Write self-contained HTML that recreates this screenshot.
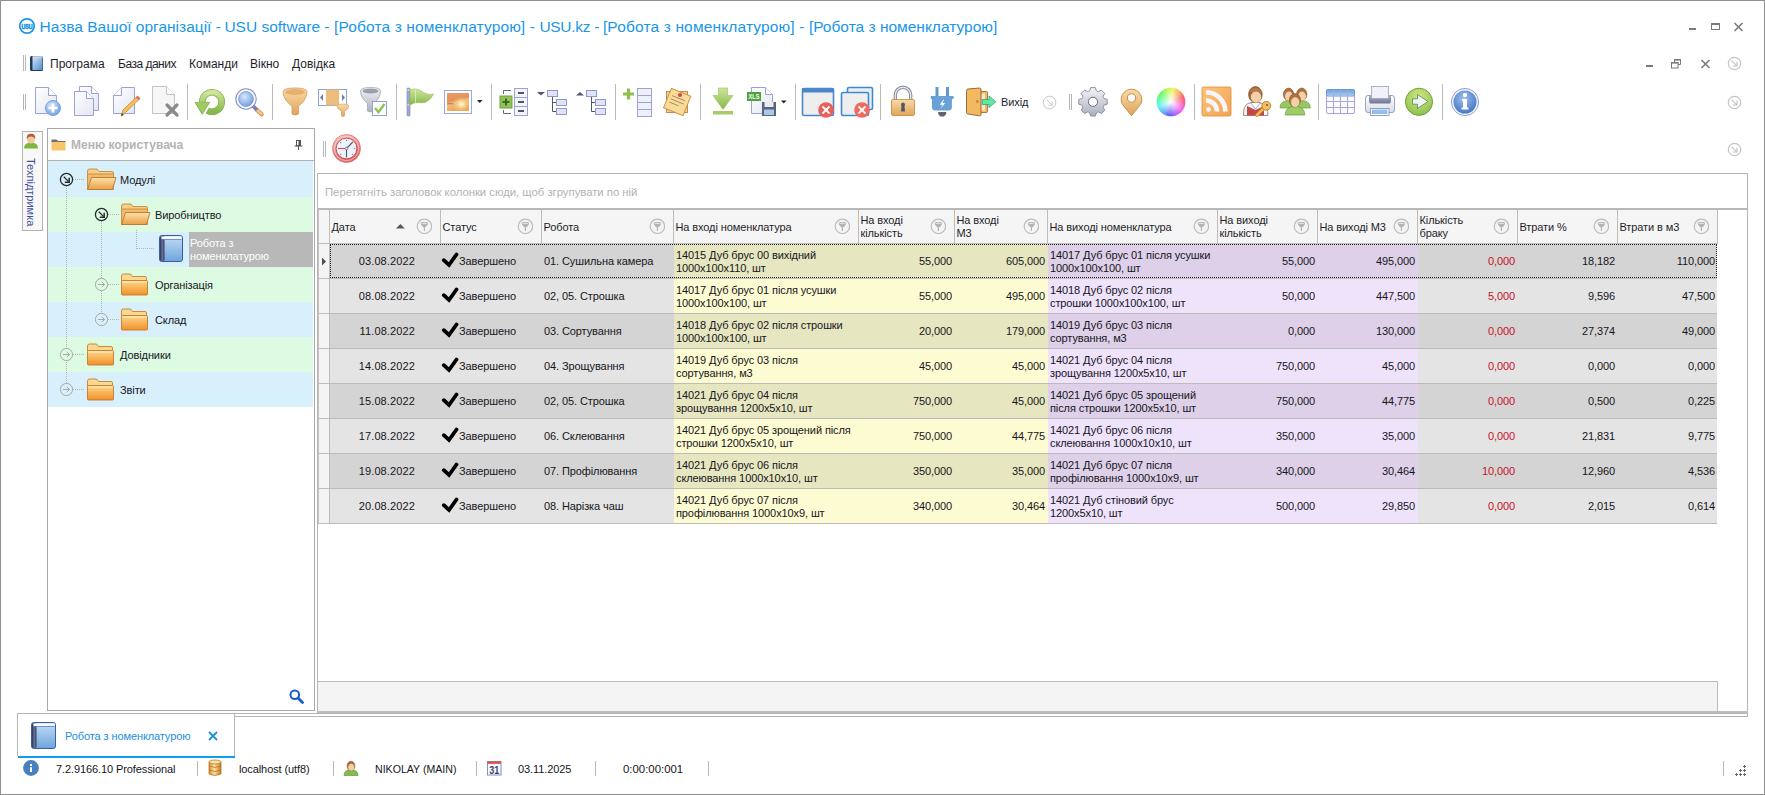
<!DOCTYPE html><html><head><meta charset="utf-8"><style>
html,body{margin:0;padding:0}
body{width:1765px;height:795px;position:relative;overflow:hidden;background:#fff;font-family:"Liberation Sans",sans-serif;font-size:11px;color:#16161c}
div,span{box-sizing:border-box}
.t{position:absolute;white-space:pre;line-height:13px}
</style></head><body><div style="position:absolute;left:0px;top:0px;width:1765px;height:795px;border:1px solid #8f8f8f"></div><svg style="position:absolute;left:18px;top:17px" width="18" height="18" viewBox="0 0 18 18"><circle cx="9" cy="9" r="7.2" fill="none" stroke="#1a96e6" stroke-width="1.7"/><text x="9" y="12" font-size="6.6" font-weight="bold" text-anchor="middle" fill="#1a96e6" stroke="#1a96e6" stroke-width="0.55" font-family="Liberation Sans" textLength="11.2" lengthAdjust="spacingAndGlyphs">USU</text></svg><div class="t" style="left:39.5px;top:17.38px;font-size:15.5px;line-height:19px;color:#1a96e6;letter-spacing:0px;">Назва Вашої організації -</div><div class="t" style="left:224.4px;top:17.38px;font-size:15.5px;line-height:19px;color:#1a96e6;letter-spacing:0px;">USU software -</div><div class="t" style="left:334.1px;top:17.38px;font-size:15.5px;line-height:19px;color:#1a96e6;letter-spacing:0.12px;">[Робота з номенклатурою] -</div><div class="t" style="left:539.4px;top:17.38px;font-size:15.5px;line-height:19px;color:#1a96e6;letter-spacing:-0.3px;">USU.kz -</div><div class="t" style="left:602.9px;top:17.38px;font-size:15.5px;line-height:19px;color:#1a96e6;letter-spacing:0.15px;">[Робота з номенклатурою] -</div><div class="t" style="left:808.9px;top:17.38px;font-size:15.5px;line-height:19px;color:#1a96e6;letter-spacing:0px;">[Робота з номенклатурою]</div><div style="position:absolute;left:1689px;top:28px;width:7px;height:2px;background:#7a7a7a"></div><div style="position:absolute;left:1711px;top:23px;width:9px;height:7px;border:1px solid #7a7a7a;border-top-width:2px"></div><svg style="position:absolute;left:1733px;top:22px" width="11" height="10" viewBox="0 0 11 10"><path d="M1.5 1 L9.5 9 M9.5 1 L1.5 9" stroke="#7a7a7a" stroke-width="1.6"/></svg><div style="position:absolute;left:23px;top:55px;width:1px;height:16px;background:#b8b8b8"></div><div style="position:absolute;left:25px;top:55px;width:1px;height:16px;background:#b8b8b8"></div><svg style="position:absolute;left:29px;top:55px" width="15" height="16" viewBox="0 0 15 16"><defs><linearGradient id="mbk" x1="0" y1="0" x2="1" y2="1"><stop offset="0" stop-color="#cfe4f8"/><stop offset="1" stop-color="#4f8ccc"/></linearGradient></defs><rect x="1" y="1" width="13" height="15" rx="1.5" fill="#24385e"/><rect x="3.5" y="2.5" width="10" height="12.5" fill="url(#mbk)"/><rect x="3.5" y="1.3" width="10" height="1.4" fill="#f4f8fc"/></svg><div class="t" style="left:50px;top:57.03px;font-size:12px;line-height:14px;color:#1e1e2a;">Програма</div><div class="t" style="left:118px;top:57.03px;font-size:12px;line-height:14px;color:#1e1e2a;letter-spacing:-0.5px;">База даних</div><div class="t" style="left:189px;top:57.03px;font-size:12px;line-height:14px;color:#1e1e2a;">Команди</div><div class="t" style="left:250px;top:57.03px;font-size:12px;line-height:14px;color:#1e1e2a;">Вікно</div><div class="t" style="left:292px;top:57.03px;font-size:12px;line-height:14px;color:#1e1e2a;">Довідка</div><div style="position:absolute;left:1646px;top:65px;width:7px;height:2px;background:#7a7a7a"></div><svg style="position:absolute;left:1670px;top:58px" width="12" height="11" viewBox="0 0 12 11"><path d="M4.5 5 V1.5 H10.5 V6.5 H8" fill="none" stroke="#7a7a7a" stroke-width="1"/><rect x="4" y="1" width="7" height="1.6" fill="#7a7a7a"/><rect x="1.5" y="4.5" width="6.5" height="5.5" fill="#fff" stroke="#7a7a7a" stroke-width="1"/><rect x="1" y="4" width="7.5" height="1.6" fill="#7a7a7a"/></svg><svg style="position:absolute;left:1700px;top:59px" width="11" height="10" viewBox="0 0 11 10"><path d="M1.5 1 L9.5 9 M9.5 1 L1.5 9" stroke="#7a7a7a" stroke-width="1.6"/></svg><svg style="position:absolute;left:1727px;top:56px" width="15" height="15" viewBox="0 0 15 15"><circle cx="7.5" cy="7.5" r="6.2" fill="none" stroke="#c4c4c4" stroke-width="1.2"/><path d="M4.6 4.6 L9.8 9.8 M10 5.8 V10 H5.8" fill="none" stroke="#c4c4c4" stroke-width="1.2"/></svg><svg style="position:absolute;left:1727px;top:95px" width="15" height="15" viewBox="0 0 15 15"><circle cx="7.5" cy="7.5" r="6.2" fill="none" stroke="#c4c4c4" stroke-width="1.2"/><path d="M4.6 4.6 L9.8 9.8 M10 5.8 V10 H5.8" fill="none" stroke="#c4c4c4" stroke-width="1.2"/></svg><svg style="position:absolute;left:1727px;top:142px" width="15" height="15" viewBox="0 0 15 15"><circle cx="7.5" cy="7.5" r="6.2" fill="none" stroke="#c4c4c4" stroke-width="1.2"/><path d="M4.6 4.6 L9.8 9.8 M10 5.8 V10 H5.8" fill="none" stroke="#c4c4c4" stroke-width="1.2"/></svg><svg style="position:absolute;left:0;top:0" width="1765" height="130" viewBox="0 0 1765 130"><defs><linearGradient id="gPage" x1="0" y1="0" x2="1" y2="1"><stop offset="0" stop-color="#ffffff"/><stop offset="1" stop-color="#e3e6f3"/></linearGradient><linearGradient id="gGold" x1="0" y1="0" x2="0" y2="1"><stop offset="0" stop-color="#f8dca8"/><stop offset="1" stop-color="#e0a45a"/></linearGradient><linearGradient id="gGreen" x1="0" y1="0" x2="0" y2="1"><stop offset="0" stop-color="#cfe59a"/><stop offset="1" stop-color="#86b84a"/></linearGradient><radialGradient id="gBlueBall" cx="0.4" cy="0.35" r="0.7"><stop offset="0" stop-color="#d9e8fb"/><stop offset="1" stop-color="#6b9ee0"/></radialGradient><radialGradient id="gInfo" cx="0.45" cy="0.35" r="0.7"><stop offset="0" stop-color="#9ec0ee"/><stop offset="1" stop-color="#3f72c0"/></radialGradient><radialGradient id="gGreenBall" cx="0.5" cy="0.3" r="0.75"><stop offset="0" stop-color="#cce880"/><stop offset="1" stop-color="#8cbe4c"/></radialGradient><linearGradient id="gSilver" x1="0" y1="0" x2="0" y2="1"><stop offset="0" stop-color="#f2f4f8"/><stop offset="1" stop-color="#aab0bc"/></linearGradient><linearGradient id="gOrange" x1="0" y1="0" x2="1" y2="1"><stop offset="0" stop-color="#fcc47c"/><stop offset="1" stop-color="#f2a450"/></linearGradient><linearGradient id="gSunset" x1="0" y1="0" x2="0.3" y2="1"><stop offset="0" stop-color="#e0a070"/><stop offset="0.45" stop-color="#e89058"/><stop offset="0.6" stop-color="#f0c080"/><stop offset="1" stop-color="#eba858"/></linearGradient></defs><rect x="23" y="94" width="1" height="16" fill="#b4b4b4"/><rect x="25" y="94" width="1" height="16" fill="#b4b4b4"/><path d="M35.5 87.5 H48.5 L56.5 95.5 V113.5 H35.5 Z" fill="url(#gPage)" stroke="#9aa2d6" stroke-width="1"/><path d="M48.5 87.5 V95.5 H56.5" fill="#fff" stroke="#9aa2d6" stroke-width="1"/><circle cx="53" cy="108" r="7.5" fill="url(#gBlueBall)" stroke="#7aa0d8" stroke-width="1"/><path d="M53 103.5 V112.5 M48.5 108 H57.5" stroke="#fff" stroke-width="2.6"/><path d="M79.5 86.5 H91.5 L98.5 93.5 V110.5 H79.5 Z" fill="url(#gPage)" stroke="#9aa2d6" stroke-width="1"/><path d="M91.5 86.5 V93.5 H98.5" fill="#fff" stroke="#9aa2d6" stroke-width="1"/><path d="M74.5 91.5 H86.5 L93.5 98.5 V115.5 H74.5 Z" fill="url(#gPage)" stroke="#9aa2d6" stroke-width="1"/><path d="M86.5 91.5 V98.5 H93.5" fill="#fff" stroke="#9aa2d6" stroke-width="1"/><path d="M121.5 87.5 H134.5 V113.5 H113.5 V95.5 Z" fill="url(#gPage)" stroke="#9aa2d6" stroke-width="1"/><path d="M113.5 95.5 H121.5 V87.5" fill="#fff" stroke="#9aa2d6" stroke-width="1"/><path d="M121 116 L123 110 L137.5 96 L140 98.5 L125.5 112.5 Z" fill="#f2c25a" stroke="#c98a2e" stroke-width="0.8"/><path d="M136 97.5 L137.5 96 L140 98.5 L138.5 100 Z" fill="#e06060"/><path d="M121 116 L122 113 L124 115 Z" fill="#444"/><path d="M152.5 86.5 H166.5 L174.5 94.5 V113.5 H152.5 Z" fill="#f6f6f6" stroke="#c4c4c4" stroke-width="1"/><path d="M166.5 86.5 V94.5 H174.5" fill="#fff" stroke="#c4c4c4" stroke-width="1"/><path d="M167 105 L177 115 M177 105 L167 115" stroke="#8a8a8a" stroke-width="3.2" stroke-linecap="round"/><rect x="187" y="84" width="1" height="36" fill="#bcbcbc"/><path d="M202.25 102 A9.75 9.75 0 1 1 207.4 110.6" fill="none" stroke="#7fae4a" stroke-width="6.6"/><path d="M202.25 102 A9.75 9.75 0 1 1 207.4 110.6" fill="none" stroke="url(#gGreen)" stroke-width="5.2"/><path d="M195 102.4 H209.7 L202.2 114.4 Z" fill="#9ccb62" stroke="#7fae4a" stroke-width="0.8"/><path d="M256.5 109.5 L261.5 114.2" stroke="#c88a48" stroke-width="4.2" stroke-linecap="round"/><path d="M256.5 109.5 L261.5 114.2" stroke="#f2c890" stroke-width="2.6" stroke-linecap="round"/><path d="M252 105 L257 110" stroke="#7880b8" stroke-width="3.6"/><circle cx="246" cy="99" r="10.2" fill="#f8f9fd" stroke="#8890c0" stroke-width="1.1"/><circle cx="246" cy="99" r="7.4" fill="url(#gBlueBall)" stroke="#7c90d0" stroke-width="0.8"/><rect x="272" y="84" width="1" height="36" fill="#bcbcbc"/><path d="M283 92 Q283 88 295 88 Q307 88 307 92 Q306 101 298.5 106 V114 Q295 116 292 114 V106 Q284 101 283 92 Z" fill="url(#gGold)" stroke="#d29a58" stroke-width="0.8"/><ellipse cx="295" cy="92" rx="10" ry="3" fill="#e6b070"/><rect x="318.5" y="89.5" width="28" height="16" fill="#fff" stroke="#8fa0dc"/><rect x="326" y="89.5" width="13" height="16" fill="#eebd7c"/><path d="M323 94 V101 L320 97.5 Z M342 94 V101 L345 97.5 Z" fill="#7a8094"/><path d="M337 106 Q337 104 343 104 Q349 104 349 106 Q348.5 109.5 344.5 111 V116 Q343 117 341.5 116 V111 Q337.5 109.5 337 106 Z" fill="url(#gGold)" stroke="#d29a58" stroke-width="0.6"/><path d="M360.5 91 Q360.5 87.5 370.5 87.5 Q380.5 87.5 380.5 91 Q380 99 374 103 V111 Q370.5 113 367.5 111 V103 Q361 99 360.5 91 Z" fill="url(#gSilver)" stroke="#a0a6b0" stroke-width="0.8"/><ellipse cx="370.5" cy="91" rx="8" ry="2.6" fill="#9aa0aa"/><rect x="372.5" y="101.5" width="14" height="14" fill="#fff" stroke="#98a0d0"/><path d="M375 108 L378.5 112 L384.5 104" fill="none" stroke="#8cc152" stroke-width="2.4"/><rect x="396" y="84" width="1" height="36" fill="#bcbcbc"/><rect x="407" y="88" width="3" height="28" rx="0.8" fill="#a0aad0" stroke="#7a86b8" stroke-width="0.6"/><rect x="407.5" y="89" width="2" height="2" fill="#c8e890"/><rect x="407.5" y="104" width="2" height="1.5" fill="#c8e890"/><path d="M410 89.5 Q418 87.5 423.5 92.5 Q428 95.5 433.8 94 Q430 100.5 425 102.5 Q421 103 418 102.5 Q413 102.6 410 105 Z" fill="url(#gGreen)" stroke="#8ab058" stroke-width="0.5"/><path d="M415.5 89.5 V103" stroke="#e4f4c0" stroke-width="1" opacity="0.7"/><defs><radialGradient id="gSun" cx="0.65" cy="0.62" r="0.45"><stop offset="0" stop-color="#fffbe0" stop-opacity="1"/><stop offset="0.35" stop-color="#fce0a0" stop-opacity="0.8"/><stop offset="1" stop-color="#f0b070" stop-opacity="0"/></radialGradient></defs><rect x="444.5" y="90.5" width="27" height="23" fill="#fff" stroke="#9aaad8"/><rect x="447" y="93" width="22" height="18" fill="url(#gSunset)"/><path d="M447 103.5 Q452 102.6 456 104.2 H447 Z" fill="#8a5a40" opacity="0.7"/><rect x="447" y="93" width="22" height="18" fill="url(#gSun)"/><path d="M477 100 H482.5 L479.75 103 Z" fill="#222"/><rect x="491" y="84" width="1" height="36" fill="#bcbcbc"/><path d="M511 90.5 H503.5 V94 M503.5 110 V113.5 H511" fill="none" stroke="#606880" stroke-width="1"/><rect x="500" y="96" width="12" height="12" fill="#93c25a" stroke="#6ea03a"/><path d="M506 98.5 V105.5 M502.5 102 H509.5" stroke="#3b6a1e" stroke-width="2"/><rect x="514.5" y="88.5" width="13" height="9" fill="#f4f5fb" stroke="#9aa2d6"/><rect x="518" y="92.0" width="6" height="2" fill="#505464"/><rect x="514.5" y="97.5" width="13" height="9" fill="#f4f5fb" stroke="#9aa2d6"/><rect x="518" y="101.0" width="6" height="2" fill="#505464"/><rect x="514.5" y="106.5" width="13" height="9" fill="#f4f5fb" stroke="#9aa2d6"/><rect x="518" y="110.0" width="6" height="2" fill="#505464"/><path d="M537 92 H545 L541 95.5 Z" fill="#505868"/><path d="M552.5 96.5 V111.5 H556 M552.5 102.5 H556" fill="none" stroke="#505868" stroke-width="1"/><rect x="547.5" y="90.5" width="10" height="6" fill="#dfe3f4" stroke="#8f98cc"/><rect x="556.5" y="99.5" width="10" height="6" fill="#dfe3f4" stroke="#8f98cc"/><rect x="556.5" y="108.5" width="10" height="6" fill="#dfe3f4" stroke="#8f98cc"/><path d="M576 95.5 H584 L580 92 Z" fill="#505868"/><path d="M591.5 96.5 V111.5 H595 M591.5 102.5 H595" fill="none" stroke="#505868" stroke-width="1"/><rect x="586.5" y="90.5" width="10" height="6" fill="#dfe3f4" stroke="#8f98cc"/><rect x="595.5" y="99.5" width="10" height="6" fill="#dfe3f4" stroke="#8f98cc"/><rect x="595.5" y="108.5" width="10" height="6" fill="#dfe3f4" stroke="#8f98cc"/><rect x="615" y="84" width="1" height="36" fill="#bcbcbc"/><path d="M628.5 88.5 V99.5 M623 94 H634" stroke="#8cc152" stroke-width="3.2"/><rect x="637.5" y="88.5" width="14" height="7" fill="#eef0fa" stroke="#9aa2d6"/><rect x="637.5" y="95.5" width="14" height="7" fill="#eef0fa" stroke="#9aa2d6"/><rect x="637.5" y="102.5" width="14" height="7" fill="#eef0fa" stroke="#9aa2d6"/><rect x="637.5" y="109.5" width="14" height="7" fill="#eef0fa" stroke="#9aa2d6"/><rect x="666.5" y="91.5" width="21" height="21" fill="#f4d28a" stroke="#c08040" stroke-width="0.9"/><g transform="rotate(22 677.2 102)"><rect x="666.7" y="91.5" width="21" height="21" fill="#f8dc98" stroke="#c89048" stroke-width="0.9"/><path d="M670 98 H684 M670 101.5 H684 M670 105 H680" stroke="#a08060" stroke-width="0.8"/></g><circle cx="680" cy="95" r="2.1" fill="#d84848"/><rect x="700" y="84" width="1" height="36" fill="#bcbcbc"/><path d="M718.5 88 H727.5 V95.5 H733 L723 109.5 L713 95.5 H718.5 Z" fill="url(#gGreen)" stroke="#9cc060" stroke-width="0.6"/><rect x="713" y="111" width="20" height="3.5" fill="#a6cc6a"/><path d="M751.5 87.5 H765.5 L772.5 94.5 V113.5 H751.5 Z" fill="url(#gPage)" stroke="#9aa2d6" stroke-width="1"/><path d="M765.5 87.5 V94.5 H772.5" fill="#fff" stroke="#9aa2d6" stroke-width="1"/><rect x="747" y="92" width="14" height="9" fill="#4ea43a"/><text x="754" y="99.2" font-size="7" font-weight="bold" fill="#fff" text-anchor="middle" font-family="Liberation Sans" textLength="11" lengthAdjust="spacingAndGlyphs">XLS</text><rect x="762" y="102" width="14" height="14" fill="#5a6478"/><rect x="764.5" y="102" width="9" height="5" fill="#e8eaf0"/><rect x="764" y="109.5" width="10" height="5.5" fill="#a8c8ec"/><path d="M781 100.5 H786.5 L783.75 103.5 Z" fill="#222"/><rect x="795" y="84" width="1" height="36" fill="#bcbcbc"/><rect x="802.5" y="88.5" width="31" height="27" rx="1.5" fill="#eeeeee" stroke="#4a86c8" stroke-width="1.6"/><rect x="802" y="88" width="32" height="4.5" fill="#4a86c8"/><circle cx="826" cy="110" r="7.8" fill="#e8605a"/><path d="M822.5 106.5 L829.5 113.5 M829.5 106.5 L822.5 113.5" stroke="#fff" stroke-width="1.8"/><rect x="847.5" y="87.5" width="25" height="22" rx="1.5" fill="#eeeeee" stroke="#3a8ad8" stroke-width="1.6"/><rect x="841.5" y="92.5" width="27" height="23" rx="1.5" fill="#eeeeee" stroke="#3a8ad8" stroke-width="1.6"/><circle cx="862" cy="110" r="7.8" fill="#f06a5e"/><path d="M858.5 106.5 L865.5 113.5 M865.5 106.5 L858.5 113.5" stroke="#fff" stroke-width="1.8"/><rect x="880" y="84" width="1" height="36" fill="#bcbcbc"/><path d="M895.3 99.5 V95 A7.7 7.7 0 0 1 910.7 95 V99.5" fill="none" stroke="#8c929c" stroke-width="3.4"/><path d="M895.3 99.5 V95 A7.7 7.7 0 0 1 910.7 95 V99.5" fill="none" stroke="#e8ecf2" stroke-width="1.2"/><rect x="891.5" y="99.5" width="23" height="16" rx="1.5" fill="url(#gGold)" stroke="#c89048" stroke-width="0.9"/><ellipse cx="903" cy="104.6" rx="1.9" ry="2" fill="#505868"/><path d="M901.6 105 H904.4 L905 111.6 H901 Z" fill="#505868"/><rect x="935.5" y="87" width="3" height="10" fill="#5e9ad0"/><rect x="946" y="87" width="3" height="10" fill="#5e9ad0"/><path d="M930.8 96 H953.6 V99 H951.9 V107 Q951.9 110.6 948.3 110.6 H935.5 Q931.9 110.6 931.9 107 V99 H930.8 Z" fill="#6aa2d6"/><path d="M943.5 99.5 L939.8 104.8 H942.6 L940.6 108.8 L945.2 103 H942.4 L944.2 99.5 Z" fill="#fff"/><path d="M938.2 112 H946.2 V114 L944 116.5 H940.4 L938.2 114 Z" fill="#5c6270"/><rect x="971.5" y="91.5" width="16" height="21" rx="1.2" fill="#f6b860" stroke="#9a7040" stroke-width="0.9"/><rect x="974" y="93.5" width="11" height="17" fill="#f8e8c8"/><path d="M966.5 90.5 Q966.5 89.3 968 89 L979.5 88 Q981 88 981 89.5 V114.5 Q981 116 979.5 115.8 L968 114 Q966.5 113.7 966.5 112.5 Z" fill="#f4b860" stroke="#8a6030" stroke-width="0.9"/><circle cx="977.3" cy="101.5" r="0.9" fill="none" stroke="#705030" stroke-width="0.6"/><path d="M982.3 99.5 H989 V96 L995.8 101.8 L989 107.6 V104.5 H982.3 Z" fill="#5ee8a0" stroke="#2a9a60" stroke-width="0.7"/><circle cx="1049.5" cy="102.5" r="6.3" fill="none" stroke="#c8c8c8" stroke-width="1"/><path d="M1046.8 99.8 L1052.2 105.2 M1052.2 101.5 V105.2 H1048.5" fill="none" stroke="#c8c8c8" stroke-width="1"/><rect x="1069" y="94" width="1" height="16" fill="#b4b4b4"/><rect x="1071" y="94" width="1" height="16" fill="#b4b4b4"/><polygon points="1088.68,91.36 1089.71,90.68 1090.62,87.60 1095.38,87.60 1096.29,90.68 1097.32,91.36 1097.32,91.36 1098.54,91.61 1101.36,90.08 1104.72,93.44 1103.19,96.26 1103.44,97.48 1103.44,97.48 1104.12,98.51 1107.20,99.42 1107.20,104.18 1104.12,105.09 1103.44,106.12 1103.44,106.12 1103.19,107.34 1104.72,110.16 1101.36,113.52 1098.54,111.99 1097.32,112.24 1097.32,112.24 1096.29,112.92 1095.38,116.00 1090.62,116.00 1089.71,112.92 1088.68,112.24 1088.68,112.24 1087.46,111.99 1084.64,113.52 1081.28,110.16 1082.81,107.34 1082.56,106.12 1082.56,106.12 1081.88,105.09 1078.80,104.18 1078.80,99.42 1081.88,98.51 1082.56,97.48 1082.56,97.48 1082.81,96.26 1081.28,93.44 1084.64,90.08 1087.46,91.61 1088.68,91.36" fill="url(#gSilver)" stroke="#8a909c" stroke-width="1" stroke-linejoin="round"/><circle cx="1093" cy="101.8" r="4.6" fill="#fff" stroke="#6a7080" stroke-width="1"/><path d="M1131.5 115.7 L1122.5 104.5 A10.3 10.3 0 1 1 1140.5 104.5 Z" fill="url(#gGold)" stroke="#c89050" stroke-width="1"/><circle cx="1131.5" cy="98" r="4.2" fill="#fdfcfa" stroke="#c89050" stroke-width="1.1"/><defs><radialGradient id="gWhite" cx="0.5" cy="0.5" r="0.5"><stop offset="0" stop-color="#fff" stop-opacity="1"/><stop offset="1" stop-color="#fff" stop-opacity="0"/></radialGradient></defs><path d="M1171 102 L1185.00 102.00 A14 14 0 0 1 1184.79 104.43 Z" fill="#f75498" stroke="#f75498" stroke-width="0.6"/><path d="M1171 102 L1184.79 104.43 A14 14 0 0 1 1184.16 106.79 Z" fill="#f754b3" stroke="#f754b3" stroke-width="0.6"/><path d="M1171 102 L1184.16 106.79 A14 14 0 0 1 1183.12 109.00 Z" fill="#f754ce" stroke="#f754ce" stroke-width="0.6"/><path d="M1171 102 L1183.12 109.00 A14 14 0 0 1 1181.72 111.00 Z" fill="#f754e9" stroke="#f754e9" stroke-width="0.6"/><path d="M1171 102 L1181.72 111.00 A14 14 0 0 1 1180.00 112.72 Z" fill="#e954f7" stroke="#e954f7" stroke-width="0.6"/><path d="M1171 102 L1180.00 112.72 A14 14 0 0 1 1178.00 114.12 Z" fill="#ce54f7" stroke="#ce54f7" stroke-width="0.6"/><path d="M1171 102 L1178.00 114.12 A14 14 0 0 1 1175.79 115.16 Z" fill="#b354f7" stroke="#b354f7" stroke-width="0.6"/><path d="M1171 102 L1175.79 115.16 A14 14 0 0 1 1173.43 115.79 Z" fill="#9854f7" stroke="#9854f7" stroke-width="0.6"/><path d="M1171 102 L1173.43 115.79 A14 14 0 0 1 1171.00 116.00 Z" fill="#7c54f7" stroke="#7c54f7" stroke-width="0.6"/><path d="M1171 102 L1171.00 116.00 A14 14 0 0 1 1168.57 115.79 Z" fill="#6154f7" stroke="#6154f7" stroke-width="0.6"/><path d="M1171 102 L1168.57 115.79 A14 14 0 0 1 1166.21 115.16 Z" fill="#5461f7" stroke="#5461f7" stroke-width="0.6"/><path d="M1171 102 L1166.21 115.16 A14 14 0 0 1 1164.00 114.12 Z" fill="#547cf7" stroke="#547cf7" stroke-width="0.6"/><path d="M1171 102 L1164.00 114.12 A14 14 0 0 1 1162.00 112.72 Z" fill="#5498f7" stroke="#5498f7" stroke-width="0.6"/><path d="M1171 102 L1162.00 112.72 A14 14 0 0 1 1160.28 111.00 Z" fill="#54b3f7" stroke="#54b3f7" stroke-width="0.6"/><path d="M1171 102 L1160.28 111.00 A14 14 0 0 1 1158.88 109.00 Z" fill="#54cef7" stroke="#54cef7" stroke-width="0.6"/><path d="M1171 102 L1158.88 109.00 A14 14 0 0 1 1157.84 106.79 Z" fill="#54e9f7" stroke="#54e9f7" stroke-width="0.6"/><path d="M1171 102 L1157.84 106.79 A14 14 0 0 1 1157.21 104.43 Z" fill="#54f7e9" stroke="#54f7e9" stroke-width="0.6"/><path d="M1171 102 L1157.21 104.43 A14 14 0 0 1 1157.00 102.00 Z" fill="#54f7ce" stroke="#54f7ce" stroke-width="0.6"/><path d="M1171 102 L1157.00 102.00 A14 14 0 0 1 1157.21 99.57 Z" fill="#54f7b3" stroke="#54f7b3" stroke-width="0.6"/><path d="M1171 102 L1157.21 99.57 A14 14 0 0 1 1157.84 97.21 Z" fill="#54f798" stroke="#54f798" stroke-width="0.6"/><path d="M1171 102 L1157.84 97.21 A14 14 0 0 1 1158.88 95.00 Z" fill="#54f77c" stroke="#54f77c" stroke-width="0.6"/><path d="M1171 102 L1158.88 95.00 A14 14 0 0 1 1160.28 93.00 Z" fill="#54f761" stroke="#54f761" stroke-width="0.6"/><path d="M1171 102 L1160.28 93.00 A14 14 0 0 1 1162.00 91.28 Z" fill="#61f754" stroke="#61f754" stroke-width="0.6"/><path d="M1171 102 L1162.00 91.28 A14 14 0 0 1 1164.00 89.88 Z" fill="#7cf754" stroke="#7cf754" stroke-width="0.6"/><path d="M1171 102 L1164.00 89.88 A14 14 0 0 1 1166.21 88.84 Z" fill="#98f754" stroke="#98f754" stroke-width="0.6"/><path d="M1171 102 L1166.21 88.84 A14 14 0 0 1 1168.57 88.21 Z" fill="#b3f754" stroke="#b3f754" stroke-width="0.6"/><path d="M1171 102 L1168.57 88.21 A14 14 0 0 1 1171.00 88.00 Z" fill="#cef754" stroke="#cef754" stroke-width="0.6"/><path d="M1171 102 L1171.00 88.00 A14 14 0 0 1 1173.43 88.21 Z" fill="#e9f754" stroke="#e9f754" stroke-width="0.6"/><path d="M1171 102 L1173.43 88.21 A14 14 0 0 1 1175.79 88.84 Z" fill="#f7e954" stroke="#f7e954" stroke-width="0.6"/><path d="M1171 102 L1175.79 88.84 A14 14 0 0 1 1178.00 89.88 Z" fill="#f7ce54" stroke="#f7ce54" stroke-width="0.6"/><path d="M1171 102 L1178.00 89.88 A14 14 0 0 1 1180.00 91.28 Z" fill="#f7b354" stroke="#f7b354" stroke-width="0.6"/><path d="M1171 102 L1180.00 91.28 A14 14 0 0 1 1181.72 93.00 Z" fill="#f79854" stroke="#f79854" stroke-width="0.6"/><path d="M1171 102 L1181.72 93.00 A14 14 0 0 1 1183.12 95.00 Z" fill="#f77c54" stroke="#f77c54" stroke-width="0.6"/><path d="M1171 102 L1183.12 95.00 A14 14 0 0 1 1184.16 97.21 Z" fill="#f76154" stroke="#f76154" stroke-width="0.6"/><path d="M1171 102 L1184.16 97.21 A14 14 0 0 1 1184.79 99.57 Z" fill="#f75461" stroke="#f75461" stroke-width="0.6"/><path d="M1171 102 L1184.79 99.57 A14 14 0 0 1 1185.00 102.00 Z" fill="#f7547c" stroke="#f7547c" stroke-width="0.6"/><circle cx="1171" cy="102" r="14" fill="url(#gWhite)"/><rect x="1194" y="84" width="1" height="36" fill="#bcbcbc"/><rect x="1202" y="87" width="29" height="29" rx="1.5" fill="url(#gOrange)" stroke="#e08a3a" stroke-width="0.8"/><circle cx="1208.5" cy="109.4" r="2.4" fill="#f4f6fc"/><path d="M1206 100.5 A11.1 11.1 0 0 1 1217.1 111.6" fill="none" stroke="#f4f6fc" stroke-width="4.6"/><path d="M1206 92.25 A19.35 19.35 0 0 1 1225.35 111.6" fill="none" stroke="#f4f6fc" stroke-width="4.7"/><path d="M1243.5 115.5 Q1243 106 1248 103.5 L1255.5 101.8 L1263 103.5 Q1268 106 1268 115.5 Z" fill="#f4f4f4" stroke="#8a7a70" stroke-width="0.8"/><path d="M1247 115.5 V106 L1255.5 110 L1264 106 V115.5 Z" fill="#c4484a"/><path d="M1250.5 102.5 L1255.5 109 L1260.5 102.5 Z" fill="#fff" stroke="#7a7a7a" stroke-width="0.6"/><ellipse cx="1255.4" cy="94.6" rx="6.8" ry="8" fill="#a8683a" stroke="#7a4a28" stroke-width="0.7"/><ellipse cx="1256" cy="97" rx="5.2" ry="5.8" fill="#f2d0a8"/><path d="M1249.5 92 Q1252 87.5 1256 88 Q1261 88.5 1262 93 Q1258 90 1253 92 Z" fill="#b87848"/><path d="M1265 107 L1257 115" stroke="#c88830" stroke-width="3.6" stroke-linecap="round"/><path d="M1265 107 L1257 115" stroke="#f2c060" stroke-width="2.2" stroke-linecap="round"/><circle cx="1266.3" cy="105.8" r="4.4" fill="#f2c060" stroke="#b87828" stroke-width="0.9"/><circle cx="1267" cy="105" r="1.1" fill="#7a5a50"/><path d="M1280.1 108 Q1279.6 101 1288.6 100.5 Q1297.6 101 1297.1 108 Z" fill="#96c860" stroke="#6a9a40" stroke-width="0.7"/><ellipse cx="1288.6" cy="94.4" rx="5.2" ry="6.3" fill="#b07040" stroke="#8a5430" stroke-width="0.6"/><ellipse cx="1288.8999999999999" cy="96.2" rx="3.9" ry="4.6" fill="#f2d0a8"/><path d="M1293.2 108 Q1292.7 101 1301.7 100.5 Q1310.7 101 1310.2 108 Z" fill="#96c860" stroke="#6a9a40" stroke-width="0.7"/><ellipse cx="1301.7" cy="94.4" rx="5.2" ry="6.3" fill="#b07040" stroke="#8a5430" stroke-width="0.6"/><ellipse cx="1302.0" cy="96.2" rx="3.9" ry="4.6" fill="#f2d0a8"/><path d="M1285.2 115 Q1285 107 1295 106 Q1305 107 1304.8 115 Z" fill="#9ccc66" stroke="#6a9a40" stroke-width="0.7"/><ellipse cx="1294.9" cy="100.3" rx="5.6" ry="6.8" fill="#b07040" stroke="#8a5430" stroke-width="0.6"/><ellipse cx="1295.2" cy="102.2" rx="4.2" ry="5" fill="#f2d0a8"/><rect x="1318" y="84" width="1" height="36" fill="#bcbcbc"/><defs><linearGradient id="gTblH" x1="0" y1="0" x2="0" y2="1"><stop offset="0" stop-color="#6fa4dc"/><stop offset="1" stop-color="#a6caee"/></linearGradient></defs><rect x="1326.5" y="89.5" width="28" height="24" rx="1.5" fill="#fbfbff" stroke="#a4a4dc"/><path d="M1327 95.5 V91 Q1327 90 1328 90 H1353 Q1354 90 1354 91 V95.5 Z" fill="url(#gTblH)"/><rect x="1326.5" y="89.5" width="28" height="6.5" rx="1.5" fill="none" stroke="#6a9ad4"/><rect x="1333" y="90" width="1" height="23" fill="#a8a8e0"/><rect x="1340" y="90" width="1" height="23" fill="#a8a8e0"/><rect x="1347" y="90" width="1" height="23" fill="#a8a8e0"/><rect x="1327" y="101" width="27" height="1" fill="#a8a8e0"/><rect x="1327" y="107" width="27" height="1" fill="#a8a8e0"/><defs><linearGradient id="gPrn" x1="0" y1="0" x2="0" y2="1"><stop offset="0" stop-color="#ffffff"/><stop offset="1" stop-color="#d8dce8"/></linearGradient><linearGradient id="gPrnD" x1="0" y1="0" x2="0" y2="1"><stop offset="0" stop-color="#a8b0c4"/><stop offset="1" stop-color="#6e7890"/></linearGradient></defs><rect x="1365.5" y="95.5" width="29" height="17" rx="2.5" fill="url(#gPrn)" stroke="#9098c0" stroke-width="0.9"/><path d="M1369 95.5 H1391 V101 Q1391 103.6 1388.5 103.6 H1371.5 Q1369 103.6 1369 101 Z" fill="url(#gPrnD)"/><rect x="1371.5" y="86.5" width="17" height="12" fill="#f0f2f8" stroke="#a0a8c8" stroke-width="0.9"/><rect x="1370.5" y="108.5" width="18.5" height="7" fill="#fff" stroke="#9098c0" stroke-width="0.9"/><rect x="1372" y="109.5" width="15.5" height="4.5" fill="#90c0ec"/><circle cx="1419" cy="101.8" r="13.6" fill="url(#gGreenBall)" stroke="#6a9a3a" stroke-width="0.9"/><path d="M1412.5 98.8 H1417.5 V94.5 L1428 101.5 L1417.5 108.5 V104.2 H1412.5 Z" fill="#eef2fa" stroke="#5a8a40" stroke-width="0.8"/><rect x="1442" y="84" width="1" height="36" fill="#bcbcbc"/><circle cx="1465" cy="102" r="13.6" fill="#f0f3fa" stroke="#8aa2d8" stroke-width="1"/><circle cx="1465" cy="102" r="11.5" fill="url(#gInfo)"/><circle cx="1465" cy="95" r="2.2" fill="#fff"/><path d="M1462 99 H1467 V107.5 H1468.5 V109.5 H1461.5 V107.5 H1463 V101 H1462 Z" fill="#fff"/></svg><div class="t" style="left:1001px;top:95.86px;font-size:11px;line-height:13px;letter-spacing:-0.1px;color:#1e1e2a;">Вихід</div><div style="position:absolute;left:22px;top:131px;width:21px;height:100px;border:1px solid #b4b4b4;background:#f8f8f8"></div><svg style="position:absolute;left:23px;top:133px" width="16" height="16" viewBox="0 0 16 16"><path d="M1 15.5 Q1 9.5 8 9.5 Q15 9.5 15 15.5 Z" fill="#7cb83e"/><ellipse cx="8" cy="5.8" rx="4" ry="4.8" fill="#f0c8a0"/><path d="M3.8 6 Q3.2 0.8 8 0.8 Q12.8 0.8 12.2 6 Q11 3.2 8 3.4 Q5 3.2 3.8 6 Z" fill="#b06030"/></svg><div class="t" style="left:24px;top:157.5px;width:14px;height:74px;font-size:11px;line-height:14px;color:#3f4f9a;writing-mode:vertical-rl;">Техпідтримка</div><div style="position:absolute;left:47px;top:128px;width:268px;height:583px;border:1px solid #a8a8a8;background:#fff"></div><div style="position:absolute;left:48px;top:160px;width:266px;height:1px;background:#b0b0b0"></div><svg style="position:absolute;left:51px;top:138px" width="15" height="13" viewBox="0 0 15 13"><path d="M0.5 1.5 H5.5 L7 3 H14.5 V4.5 H0.5 Z" fill="#707070"/><rect x="0.5" y="4" width="14" height="8.5" fill="#fac46a"/></svg><div class="t" style="left:71px;top:138.03px;font-size:12px;line-height:14px;color:#b4b4b4;font-weight:bold;">Меню користувача</div><svg style="position:absolute;left:294px;top:140px" width="9" height="10" viewBox="0 0 9 10"><rect x="2.5" y="0.5" width="4" height="5" fill="none" stroke="#555" stroke-width="1"/><rect x="4.5" y="0.5" width="2" height="5" fill="#555"/><rect x="0.5" y="5.5" width="8" height="1" fill="#555"/><rect x="4" y="6" width="1" height="4" fill="#555"/></svg><div style="position:absolute;left:48px;top:161px;width:265px;height:36px;background:#d8effc"></div><div style="position:absolute;left:48px;top:197px;width:265px;height:35px;background:#ddfae3"></div><div style="position:absolute;left:48px;top:232px;width:265px;height:35px;background:#d8effc"></div><div style="position:absolute;left:48px;top:267px;width:265px;height:35px;background:#ddfae3"></div><div style="position:absolute;left:48px;top:302px;width:265px;height:35px;background:#d8effc"></div><div style="position:absolute;left:48px;top:337px;width:265px;height:35px;background:#ddfae3"></div><div style="position:absolute;left:48px;top:372px;width:265px;height:35px;background:#d8effc"></div><div style="position:absolute;left:189px;top:232px;width:124px;height:35px;background:#b8b8b8"></div><div style="position:absolute;left:66px;top:186px;width:1px;height:197px;background:repeating-linear-gradient(to bottom,#b4b4b4 0 1px,transparent 1px 2px)"></div><div style="position:absolute;left:101px;top:221px;width:1px;height:92px;background:repeating-linear-gradient(to bottom,#b4b4b4 0 1px,transparent 1px 2px)"></div><div style="position:absolute;left:136px;top:230px;width:1px;height:19px;background:repeating-linear-gradient(to bottom,#b4b4b4 0 1px,transparent 1px 2px)"></div><div style="position:absolute;left:73px;top:179px;width:12px;height:1px;background:repeating-linear-gradient(to right,#b4b4b4 0 1px,transparent 1px 2px)"></div><div style="position:absolute;left:73px;top:354px;width:12px;height:1px;background:repeating-linear-gradient(to right,#b4b4b4 0 1px,transparent 1px 2px)"></div><div style="position:absolute;left:73px;top:389px;width:12px;height:1px;background:repeating-linear-gradient(to right,#b4b4b4 0 1px,transparent 1px 2px)"></div><div style="position:absolute;left:108px;top:214px;width:12px;height:1px;background:repeating-linear-gradient(to right,#b4b4b4 0 1px,transparent 1px 2px)"></div><div style="position:absolute;left:108px;top:284px;width:12px;height:1px;background:repeating-linear-gradient(to right,#b4b4b4 0 1px,transparent 1px 2px)"></div><div style="position:absolute;left:108px;top:319px;width:12px;height:1px;background:repeating-linear-gradient(to right,#b4b4b4 0 1px,transparent 1px 2px)"></div><div style="position:absolute;left:137px;top:248px;width:17px;height:1px;background:repeating-linear-gradient(to right,#b4b4b4 0 1px,transparent 1px 2px)"></div><svg style="position:absolute;left:59px;top:172px" width="15" height="15" viewBox="0 0 15 15"><circle cx="7.5" cy="7.5" r="6.1" fill="#d8effc" stroke="#2a2a2a" stroke-width="1.3"/><path d="M4.8 4.8 L9.6 9.6" fill="none" stroke="#2a2a2a" stroke-width="1.3"/><path d="M10.2 5.8 V10.2 H5.8" fill="none" stroke="#2a2a2a" stroke-width="1.5"/></svg><svg style="position:absolute;left:86px;top:168px" width="31" height="23" viewBox="0 0 31 23"><defs><linearGradient id="fo" x1="0" y1="0" x2="0" y2="1"><stop offset="0" stop-color="#fde2a8"/><stop offset="1" stop-color="#e8a048"/></linearGradient></defs><path d="M1.5 3 Q1.5 1 3.5 1 H11 L13 3.5 H26 Q27.5 3.5 27.5 5 V8 H1.5 Z" fill="#f6cf86" stroke="#c88a40" stroke-width="0.9"/><path d="M1.5 21.5 V6 H27.5 V21.5 Z" fill="#eebc6c" stroke="#c88a40" stroke-width="0.9"/><path d="M5.5 9.5 H30 L26.5 21.5 H1.5 Z" fill="url(#fo)" stroke="#c07830" stroke-width="0.9"/></svg><div class="t" style="left:120px;top:173.86px;font-size:11px;line-height:13px;letter-spacing:-0.1px;">Модулі</div><svg style="position:absolute;left:94px;top:207px" width="15" height="15" viewBox="0 0 15 15"><circle cx="7.5" cy="7.5" r="6.1" fill="#ddfae3" stroke="#2a2a2a" stroke-width="1.3"/><path d="M4.8 4.8 L9.6 9.6" fill="none" stroke="#2a2a2a" stroke-width="1.3"/><path d="M10.2 5.8 V10.2 H5.8" fill="none" stroke="#2a2a2a" stroke-width="1.5"/></svg><svg style="position:absolute;left:120px;top:203px" width="31" height="23" viewBox="0 0 31 23"><defs><linearGradient id="fo" x1="0" y1="0" x2="0" y2="1"><stop offset="0" stop-color="#fde2a8"/><stop offset="1" stop-color="#e8a048"/></linearGradient></defs><path d="M1.5 3 Q1.5 1 3.5 1 H11 L13 3.5 H26 Q27.5 3.5 27.5 5 V8 H1.5 Z" fill="#f6cf86" stroke="#c88a40" stroke-width="0.9"/><path d="M1.5 21.5 V6 H27.5 V21.5 Z" fill="#eebc6c" stroke="#c88a40" stroke-width="0.9"/><path d="M5.5 9.5 H30 L26.5 21.5 H1.5 Z" fill="url(#fo)" stroke="#c07830" stroke-width="0.9"/></svg><div class="t" style="left:155px;top:208.86px;font-size:11px;line-height:13px;letter-spacing:-0.1px;">Виробництво</div><svg style="position:absolute;left:159px;top:235px" width="24" height="27" viewBox="0 0 24 27"><defs><linearGradient id="bk1" x1="0" y1="0" x2="0" y2="1"><stop offset="0" stop-color="#c4def6"/><stop offset="1" stop-color="#6ea4dc"/></linearGradient><linearGradient id="bk1s" x1="0" y1="0" x2="1" y2="0"><stop offset="0" stop-color="#2a3458"/><stop offset="0.5" stop-color="#6a7498"/><stop offset="1" stop-color="#2e3a62"/></linearGradient></defs><rect x="0.5" y="0.5" width="23" height="26" rx="2.2" fill="url(#bk1)" stroke="#3a5ca4" stroke-width="1"/><rect x="1" y="1" width="4.5" height="25" rx="1.5" fill="url(#bk1s)"/><rect x="2.5" y="1.5" width="20" height="2.6" fill="#f6f8fc"/><rect x="5.5" y="4.1" width="17" height="0.8" fill="#5a80c0"/></svg><div class="t" style="left:190px;top:236.86px;font-size:11px;line-height:13px;letter-spacing:-0.1px;color:#ffffff;">Робота з</div><div class="t" style="left:190px;top:249.86px;font-size:11px;line-height:13px;letter-spacing:-0.1px;color:#ffffff;">номенклатурою</div><svg style="position:absolute;left:94px;top:277px" width="15" height="15" viewBox="0 0 15 15"><circle cx="7.5" cy="7.5" r="6.1" fill="#ddfae3" stroke="#a8a8a8" stroke-width="1"/><path d="M4 7.5 H10.5 M7.8 4.8 L10.5 7.5 L7.8 10.2" fill="none" stroke="#a8a8a8" stroke-width="1"/></svg><svg style="position:absolute;left:120px;top:273px" width="31" height="23" viewBox="0 0 31 23"><defs><linearGradient id="fc" x1="0" y1="0" x2="0" y2="1"><stop offset="0" stop-color="#ffd88a"/><stop offset="1" stop-color="#f0902a"/></linearGradient></defs><path d="M1.5 3 Q1.5 1 3.5 1 H10.5 L12.5 3.5 H25 Q26.5 3.5 26.5 5 V8 H1.5 Z" fill="#fbd890" stroke="#c88030" stroke-width="0.9"/><rect x="1.5" y="7.5" width="26" height="14.5" rx="1" fill="url(#fc)" stroke="#c87828" stroke-width="0.9"/><path d="M2.5 9 H26.5" stroke="#fff2cc" stroke-width="1"/></svg><div class="t" style="left:155px;top:278.86px;font-size:11px;line-height:13px;letter-spacing:-0.1px;">Організація</div><svg style="position:absolute;left:94px;top:312px" width="15" height="15" viewBox="0 0 15 15"><circle cx="7.5" cy="7.5" r="6.1" fill="#d8effc" stroke="#a8a8a8" stroke-width="1"/><path d="M4 7.5 H10.5 M7.8 4.8 L10.5 7.5 L7.8 10.2" fill="none" stroke="#a8a8a8" stroke-width="1"/></svg><svg style="position:absolute;left:120px;top:308px" width="31" height="23" viewBox="0 0 31 23"><defs><linearGradient id="fc" x1="0" y1="0" x2="0" y2="1"><stop offset="0" stop-color="#ffd88a"/><stop offset="1" stop-color="#f0902a"/></linearGradient></defs><path d="M1.5 3 Q1.5 1 3.5 1 H10.5 L12.5 3.5 H25 Q26.5 3.5 26.5 5 V8 H1.5 Z" fill="#fbd890" stroke="#c88030" stroke-width="0.9"/><rect x="1.5" y="7.5" width="26" height="14.5" rx="1" fill="url(#fc)" stroke="#c87828" stroke-width="0.9"/><path d="M2.5 9 H26.5" stroke="#fff2cc" stroke-width="1"/></svg><div class="t" style="left:155px;top:313.86px;font-size:11px;line-height:13px;letter-spacing:-0.1px;">Склад</div><svg style="position:absolute;left:59px;top:347px" width="15" height="15" viewBox="0 0 15 15"><circle cx="7.5" cy="7.5" r="6.1" fill="#ddfae3" stroke="#a8a8a8" stroke-width="1"/><path d="M4 7.5 H10.5 M7.8 4.8 L10.5 7.5 L7.8 10.2" fill="none" stroke="#a8a8a8" stroke-width="1"/></svg><svg style="position:absolute;left:86px;top:343px" width="31" height="23" viewBox="0 0 31 23"><defs><linearGradient id="fc" x1="0" y1="0" x2="0" y2="1"><stop offset="0" stop-color="#ffd88a"/><stop offset="1" stop-color="#f0902a"/></linearGradient></defs><path d="M1.5 3 Q1.5 1 3.5 1 H10.5 L12.5 3.5 H25 Q26.5 3.5 26.5 5 V8 H1.5 Z" fill="#fbd890" stroke="#c88030" stroke-width="0.9"/><rect x="1.5" y="7.5" width="26" height="14.5" rx="1" fill="url(#fc)" stroke="#c87828" stroke-width="0.9"/><path d="M2.5 9 H26.5" stroke="#fff2cc" stroke-width="1"/></svg><div class="t" style="left:120px;top:348.86px;font-size:11px;line-height:13px;letter-spacing:-0.1px;">Довідники</div><svg style="position:absolute;left:59px;top:382px" width="15" height="15" viewBox="0 0 15 15"><circle cx="7.5" cy="7.5" r="6.1" fill="#d8effc" stroke="#a8a8a8" stroke-width="1"/><path d="M4 7.5 H10.5 M7.8 4.8 L10.5 7.5 L7.8 10.2" fill="none" stroke="#a8a8a8" stroke-width="1"/></svg><svg style="position:absolute;left:86px;top:378px" width="31" height="23" viewBox="0 0 31 23"><defs><linearGradient id="fc" x1="0" y1="0" x2="0" y2="1"><stop offset="0" stop-color="#ffd88a"/><stop offset="1" stop-color="#f0902a"/></linearGradient></defs><path d="M1.5 3 Q1.5 1 3.5 1 H10.5 L12.5 3.5 H25 Q26.5 3.5 26.5 5 V8 H1.5 Z" fill="#fbd890" stroke="#c88030" stroke-width="0.9"/><rect x="1.5" y="7.5" width="26" height="14.5" rx="1" fill="url(#fc)" stroke="#c87828" stroke-width="0.9"/><path d="M2.5 9 H26.5" stroke="#fff2cc" stroke-width="1"/></svg><div class="t" style="left:120px;top:383.86px;font-size:11px;line-height:13px;letter-spacing:-0.1px;">Звіти</div><svg style="position:absolute;left:289px;top:689px" width="15" height="16" viewBox="0 0 15 16"><circle cx="5.8" cy="5.8" r="4.3" fill="none" stroke="#1a5ad0" stroke-width="2"/><path d="M9 9 L13.5 13.5" stroke="#1a5ad0" stroke-width="2.8" stroke-linecap="round"/></svg><div style="position:absolute;left:323px;top:141px;width:1px;height:16px;background:#b8b8b8"></div><div style="position:absolute;left:325px;top:141px;width:1px;height:16px;background:#b8b8b8"></div><svg style="position:absolute;left:331px;top:133px" width="31" height="31" viewBox="0 0 31 31"><defs><linearGradient id="ck" x1="0.2" y1="0" x2="0.6" y2="1"><stop offset="0" stop-color="#f6c4c4"/><stop offset="0.5" stop-color="#e88888"/><stop offset="1" stop-color="#d85a5a"/></linearGradient></defs><circle cx="15.5" cy="15.5" r="14" fill="url(#ck)" stroke="#e07878" stroke-width="0.8"/><circle cx="15.5" cy="15.5" r="12.2" fill="none" stroke="#f6d6d6" stroke-width="0.9" opacity="0.8"/><circle cx="15.5" cy="15.5" r="10.4" fill="#eef2fa" stroke="#cc5050" stroke-width="1"/><circle cx="15.5" cy="7.3" r="0.6" fill="#5a6a8a"/><circle cx="9.7" cy="9.7" r="0.6" fill="#5a6a8a"/><circle cx="23.8" cy="15.5" r="0.6" fill="#5a6a8a"/><circle cx="9.7" cy="21.3" r="0.6" fill="#5a6a8a"/><circle cx="21.3" cy="21.3" r="0.6" fill="#5a6a8a"/><path d="M15.5 15.5 H7" stroke="#d05050" stroke-width="1.1"/><path d="M15.5 15.5 V24.5 M15.5 15.5 L21.8 9" stroke="#4a5a7a" stroke-width="1.1"/><circle cx="15.5" cy="15.5" r="1.3" fill="#fff" stroke="#4a5a7a" stroke-width="0.7"/></svg><div style="position:absolute;left:317px;top:173px;width:1431px;height:541px;border:1px solid #b4b4b4;background:#fff"></div><div class="t" style="left:325px;top:185.27px;font-size:11.3px;line-height:14px;color:#b2b2b2;">Перетягніть заголовок колонки сюди, щоб згрупувати по ній</div><div style="position:absolute;left:318px;top:208px;width:1429px;height:2px;background:#b8b8b8"></div><div style="position:absolute;left:318px;top:210px;width:1399px;height:33px;background:#f5f5f5"></div><div style="position:absolute;left:318px;top:243px;width:1399px;height:1px;background:#bcbcbc"></div><div style="position:absolute;left:329px;top:210px;width:1px;height:34px;background:#bcbcbc"></div><div style="position:absolute;left:440px;top:210px;width:1px;height:34px;background:#bcbcbc"></div><div style="position:absolute;left:541px;top:210px;width:1px;height:34px;background:#bcbcbc"></div><div style="position:absolute;left:673px;top:210px;width:1px;height:34px;background:#bcbcbc"></div><div style="position:absolute;left:858px;top:210px;width:1px;height:34px;background:#bcbcbc"></div><div style="position:absolute;left:954px;top:210px;width:1px;height:34px;background:#bcbcbc"></div><div style="position:absolute;left:1047px;top:210px;width:1px;height:34px;background:#bcbcbc"></div><div style="position:absolute;left:1217px;top:210px;width:1px;height:34px;background:#bcbcbc"></div><div style="position:absolute;left:1317px;top:210px;width:1px;height:34px;background:#bcbcbc"></div><div style="position:absolute;left:1417px;top:210px;width:1px;height:34px;background:#bcbcbc"></div><div style="position:absolute;left:1517px;top:210px;width:1px;height:34px;background:#bcbcbc"></div><div style="position:absolute;left:1617px;top:210px;width:1px;height:34px;background:#bcbcbc"></div><div style="position:absolute;left:1717px;top:210px;width:1px;height:34px;background:#bcbcbc"></div><div class="t" style="left:331.5px;top:220.86px;font-size:11px;line-height:13px;letter-spacing:-0.1px;color:#1e1e2a;">Дата</div><svg style="position:absolute;left:416px;top:218px" width="16" height="16" viewBox="0 0 16 16"><circle cx="8.4" cy="8.3" r="7.2" fill="none" stroke="#bcbcbc" stroke-width="1.2"/><path d="M4.6 5.6 Q5.2 8 7.8 9.6 V13 H9 V9.6 Q11.6 8 12.2 5.6 Z" fill="#b4b4b4"/><ellipse cx="8.4" cy="5.4" rx="3.6" ry="1.1" fill="#e4e4e4" stroke="#b0b0b0" stroke-width="0.9"/></svg><div class="t" style="left:442.5px;top:220.86px;font-size:11px;line-height:13px;letter-spacing:-0.1px;color:#1e1e2a;">Статус</div><svg style="position:absolute;left:517px;top:218px" width="16" height="16" viewBox="0 0 16 16"><circle cx="8.4" cy="8.3" r="7.2" fill="none" stroke="#bcbcbc" stroke-width="1.2"/><path d="M4.6 5.6 Q5.2 8 7.8 9.6 V13 H9 V9.6 Q11.6 8 12.2 5.6 Z" fill="#b4b4b4"/><ellipse cx="8.4" cy="5.4" rx="3.6" ry="1.1" fill="#e4e4e4" stroke="#b0b0b0" stroke-width="0.9"/></svg><div class="t" style="left:543.5px;top:220.86px;font-size:11px;line-height:13px;letter-spacing:-0.1px;color:#1e1e2a;">Робота</div><svg style="position:absolute;left:649px;top:218px" width="16" height="16" viewBox="0 0 16 16"><circle cx="8.4" cy="8.3" r="7.2" fill="none" stroke="#bcbcbc" stroke-width="1.2"/><path d="M4.6 5.6 Q5.2 8 7.8 9.6 V13 H9 V9.6 Q11.6 8 12.2 5.6 Z" fill="#b4b4b4"/><ellipse cx="8.4" cy="5.4" rx="3.6" ry="1.1" fill="#e4e4e4" stroke="#b0b0b0" stroke-width="0.9"/></svg><div class="t" style="left:675.5px;top:220.86px;font-size:11px;line-height:13px;letter-spacing:-0.1px;color:#1e1e2a;">На вході номенклатура</div><svg style="position:absolute;left:834px;top:218px" width="16" height="16" viewBox="0 0 16 16"><circle cx="8.4" cy="8.3" r="7.2" fill="none" stroke="#bcbcbc" stroke-width="1.2"/><path d="M4.6 5.6 Q5.2 8 7.8 9.6 V13 H9 V9.6 Q11.6 8 12.2 5.6 Z" fill="#b4b4b4"/><ellipse cx="8.4" cy="5.4" rx="3.6" ry="1.1" fill="#e4e4e4" stroke="#b0b0b0" stroke-width="0.9"/></svg><div class="t" style="left:860.5px;top:213.86px;font-size:11px;line-height:13px;letter-spacing:-0.1px;color:#1e1e2a;">На вході</div><div class="t" style="left:860.5px;top:226.86px;font-size:11px;line-height:13px;letter-spacing:-0.1px;color:#1e1e2a;">кількість</div><svg style="position:absolute;left:930px;top:218px" width="16" height="16" viewBox="0 0 16 16"><circle cx="8.4" cy="8.3" r="7.2" fill="none" stroke="#bcbcbc" stroke-width="1.2"/><path d="M4.6 5.6 Q5.2 8 7.8 9.6 V13 H9 V9.6 Q11.6 8 12.2 5.6 Z" fill="#b4b4b4"/><ellipse cx="8.4" cy="5.4" rx="3.6" ry="1.1" fill="#e4e4e4" stroke="#b0b0b0" stroke-width="0.9"/></svg><div class="t" style="left:956.5px;top:213.86px;font-size:11px;line-height:13px;letter-spacing:-0.1px;color:#1e1e2a;">На вході</div><div class="t" style="left:956.5px;top:226.86px;font-size:11px;line-height:13px;letter-spacing:-0.1px;color:#1e1e2a;">М3</div><svg style="position:absolute;left:1023px;top:218px" width="16" height="16" viewBox="0 0 16 16"><circle cx="8.4" cy="8.3" r="7.2" fill="none" stroke="#bcbcbc" stroke-width="1.2"/><path d="M4.6 5.6 Q5.2 8 7.8 9.6 V13 H9 V9.6 Q11.6 8 12.2 5.6 Z" fill="#b4b4b4"/><ellipse cx="8.4" cy="5.4" rx="3.6" ry="1.1" fill="#e4e4e4" stroke="#b0b0b0" stroke-width="0.9"/></svg><div class="t" style="left:1049.5px;top:220.86px;font-size:11px;line-height:13px;letter-spacing:-0.1px;color:#1e1e2a;">На виході номенклатура</div><svg style="position:absolute;left:1193px;top:218px" width="16" height="16" viewBox="0 0 16 16"><circle cx="8.4" cy="8.3" r="7.2" fill="none" stroke="#bcbcbc" stroke-width="1.2"/><path d="M4.6 5.6 Q5.2 8 7.8 9.6 V13 H9 V9.6 Q11.6 8 12.2 5.6 Z" fill="#b4b4b4"/><ellipse cx="8.4" cy="5.4" rx="3.6" ry="1.1" fill="#e4e4e4" stroke="#b0b0b0" stroke-width="0.9"/></svg><div class="t" style="left:1219.5px;top:213.86px;font-size:11px;line-height:13px;letter-spacing:-0.1px;color:#1e1e2a;">На виході</div><div class="t" style="left:1219.5px;top:226.86px;font-size:11px;line-height:13px;letter-spacing:-0.1px;color:#1e1e2a;">кількість</div><svg style="position:absolute;left:1293px;top:218px" width="16" height="16" viewBox="0 0 16 16"><circle cx="8.4" cy="8.3" r="7.2" fill="none" stroke="#bcbcbc" stroke-width="1.2"/><path d="M4.6 5.6 Q5.2 8 7.8 9.6 V13 H9 V9.6 Q11.6 8 12.2 5.6 Z" fill="#b4b4b4"/><ellipse cx="8.4" cy="5.4" rx="3.6" ry="1.1" fill="#e4e4e4" stroke="#b0b0b0" stroke-width="0.9"/></svg><div class="t" style="left:1319.5px;top:220.86px;font-size:11px;line-height:13px;letter-spacing:-0.1px;color:#1e1e2a;">На виході М3</div><svg style="position:absolute;left:1393px;top:218px" width="16" height="16" viewBox="0 0 16 16"><circle cx="8.4" cy="8.3" r="7.2" fill="none" stroke="#bcbcbc" stroke-width="1.2"/><path d="M4.6 5.6 Q5.2 8 7.8 9.6 V13 H9 V9.6 Q11.6 8 12.2 5.6 Z" fill="#b4b4b4"/><ellipse cx="8.4" cy="5.4" rx="3.6" ry="1.1" fill="#e4e4e4" stroke="#b0b0b0" stroke-width="0.9"/></svg><div class="t" style="left:1419.5px;top:213.86px;font-size:11px;line-height:13px;letter-spacing:-0.1px;color:#1e1e2a;">Кількість</div><div class="t" style="left:1419.5px;top:226.86px;font-size:11px;line-height:13px;letter-spacing:-0.1px;color:#1e1e2a;">браку</div><svg style="position:absolute;left:1493px;top:218px" width="16" height="16" viewBox="0 0 16 16"><circle cx="8.4" cy="8.3" r="7.2" fill="none" stroke="#bcbcbc" stroke-width="1.2"/><path d="M4.6 5.6 Q5.2 8 7.8 9.6 V13 H9 V9.6 Q11.6 8 12.2 5.6 Z" fill="#b4b4b4"/><ellipse cx="8.4" cy="5.4" rx="3.6" ry="1.1" fill="#e4e4e4" stroke="#b0b0b0" stroke-width="0.9"/></svg><div class="t" style="left:1519.5px;top:220.86px;font-size:11px;line-height:13px;letter-spacing:-0.1px;color:#1e1e2a;">Втрати %</div><svg style="position:absolute;left:1593px;top:218px" width="16" height="16" viewBox="0 0 16 16"><circle cx="8.4" cy="8.3" r="7.2" fill="none" stroke="#bcbcbc" stroke-width="1.2"/><path d="M4.6 5.6 Q5.2 8 7.8 9.6 V13 H9 V9.6 Q11.6 8 12.2 5.6 Z" fill="#b4b4b4"/><ellipse cx="8.4" cy="5.4" rx="3.6" ry="1.1" fill="#e4e4e4" stroke="#b0b0b0" stroke-width="0.9"/></svg><div class="t" style="left:1619.5px;top:220.86px;font-size:11px;line-height:13px;letter-spacing:-0.1px;color:#1e1e2a;">Втрати в м3</div><svg style="position:absolute;left:1693px;top:218px" width="16" height="16" viewBox="0 0 16 16"><circle cx="8.4" cy="8.3" r="7.2" fill="none" stroke="#bcbcbc" stroke-width="1.2"/><path d="M4.6 5.6 Q5.2 8 7.8 9.6 V13 H9 V9.6 Q11.6 8 12.2 5.6 Z" fill="#b4b4b4"/><ellipse cx="8.4" cy="5.4" rx="3.6" ry="1.1" fill="#e4e4e4" stroke="#b0b0b0" stroke-width="0.9"/></svg><svg style="position:absolute;left:395px;top:223px" width="10" height="6" viewBox="0 0 10 6"><path d="M1 5.5 H9.8 L5.4 1 Z" fill="#585858"/></svg><div style="position:absolute;left:318px;top:244px;width:11px;height:34px;background:#f4f4f4"></div><div style="position:absolute;left:329px;top:243px;width:1px;height:36px;background:#bcbcbc"></div><div style="position:absolute;left:330px;top:244px;width:344px;height:34px;background:#d4d4d4"></div><div style="position:absolute;left:674px;top:244px;width:374px;height:34px;background:#e6e6c0"></div><div style="position:absolute;left:1048px;top:244px;width:370px;height:34px;background:#ddd0e8"></div><div style="position:absolute;left:1418px;top:244px;width:299px;height:34px;background:#d4d4d4"></div><div style="position:absolute;left:318px;top:278px;width:1399px;height:1px;background:#bcbcbc"></div><div class="t" style="left:115px;width:300px;text-align:right;top:254.86px;font-size:11px;line-height:13px;letter-spacing:0.12px;">03.08.2022</div><svg style="position:absolute;left:441px;top:251px" width="18" height="18" viewBox="0 0 18 18"><path d="M2.8 9.2 L8 14 L15.5 3.5" fill="none" stroke="#000" stroke-width="3.8" stroke-linecap="round" stroke-linejoin="miter"/></svg><div class="t" style="left:459px;top:254.86px;font-size:11px;line-height:13px;letter-spacing:-0.1px;">Завершено</div><div class="t" style="left:544px;top:254.86px;font-size:11px;line-height:13px;letter-spacing:-0.1px;">01. Сушильна камера</div><div class="t" style="left:676px;top:248.86px;font-size:11px;line-height:13px;letter-spacing:-0.1px;">14015 Дуб брус 00 вихідний</div><div class="t" style="left:676px;top:261.86px;font-size:11px;line-height:13px;letter-spacing:-0.1px;">1000x100x110, шт</div><div class="t" style="left:652px;width:300px;text-align:right;top:254.86px;font-size:11px;line-height:13px;letter-spacing:-0.1px;">55,000</div><div class="t" style="left:745px;width:300px;text-align:right;top:254.86px;font-size:11px;line-height:13px;letter-spacing:-0.1px;">605,000</div><div class="t" style="left:1050px;top:248.86px;font-size:11px;line-height:13px;letter-spacing:-0.1px;">14017 Дуб брус 01 після усушки</div><div class="t" style="left:1050px;top:261.86px;font-size:11px;line-height:13px;letter-spacing:-0.1px;">1000x100x100, шт</div><div class="t" style="left:1015px;width:300px;text-align:right;top:254.86px;font-size:11px;line-height:13px;letter-spacing:-0.1px;">55,000</div><div class="t" style="left:1115px;width:300px;text-align:right;top:254.86px;font-size:11px;line-height:13px;letter-spacing:-0.1px;">495,000</div><div class="t" style="left:1215px;width:300px;text-align:right;top:254.86px;font-size:11px;line-height:13px;letter-spacing:-0.1px;color:#c8102e;">0,000</div><div class="t" style="left:1315px;width:300px;text-align:right;top:254.86px;font-size:11px;line-height:13px;letter-spacing:-0.1px;">18,182</div><div class="t" style="left:1415px;width:300px;text-align:right;top:254.86px;font-size:11px;line-height:13px;letter-spacing:-0.1px;">110,000</div><div style="position:absolute;left:318px;top:279px;width:11px;height:34px;background:#f4f4f4"></div><div style="position:absolute;left:329px;top:278px;width:1px;height:36px;background:#bcbcbc"></div><div style="position:absolute;left:330px;top:279px;width:344px;height:34px;background:#e4e4e4"></div><div style="position:absolute;left:674px;top:279px;width:374px;height:34px;background:#fdfbd2"></div><div style="position:absolute;left:1048px;top:279px;width:370px;height:34px;background:#efe3fc"></div><div style="position:absolute;left:1418px;top:279px;width:299px;height:34px;background:#e4e4e4"></div><div style="position:absolute;left:318px;top:313px;width:1399px;height:1px;background:#bcbcbc"></div><div class="t" style="left:115px;width:300px;text-align:right;top:289.86px;font-size:11px;line-height:13px;letter-spacing:0.12px;">08.08.2022</div><svg style="position:absolute;left:441px;top:286px" width="18" height="18" viewBox="0 0 18 18"><path d="M2.8 9.2 L8 14 L15.5 3.5" fill="none" stroke="#000" stroke-width="3.8" stroke-linecap="round" stroke-linejoin="miter"/></svg><div class="t" style="left:459px;top:289.86px;font-size:11px;line-height:13px;letter-spacing:-0.1px;">Завершено</div><div class="t" style="left:544px;top:289.86px;font-size:11px;line-height:13px;letter-spacing:-0.1px;">02, 05. Строшка</div><div class="t" style="left:676px;top:283.86px;font-size:11px;line-height:13px;letter-spacing:-0.1px;">14017 Дуб брус 01 після усушки</div><div class="t" style="left:676px;top:296.86px;font-size:11px;line-height:13px;letter-spacing:-0.1px;">1000x100x100, шт</div><div class="t" style="left:652px;width:300px;text-align:right;top:289.86px;font-size:11px;line-height:13px;letter-spacing:-0.1px;">55,000</div><div class="t" style="left:745px;width:300px;text-align:right;top:289.86px;font-size:11px;line-height:13px;letter-spacing:-0.1px;">495,000</div><div class="t" style="left:1050px;top:283.86px;font-size:11px;line-height:13px;letter-spacing:-0.1px;">14018 Дуб брус 02 після</div><div class="t" style="left:1050px;top:296.86px;font-size:11px;line-height:13px;letter-spacing:-0.1px;">строшки 1000x100x100, шт</div><div class="t" style="left:1015px;width:300px;text-align:right;top:289.86px;font-size:11px;line-height:13px;letter-spacing:-0.1px;">50,000</div><div class="t" style="left:1115px;width:300px;text-align:right;top:289.86px;font-size:11px;line-height:13px;letter-spacing:-0.1px;">447,500</div><div class="t" style="left:1215px;width:300px;text-align:right;top:289.86px;font-size:11px;line-height:13px;letter-spacing:-0.1px;color:#c8102e;">5,000</div><div class="t" style="left:1315px;width:300px;text-align:right;top:289.86px;font-size:11px;line-height:13px;letter-spacing:-0.1px;">9,596</div><div class="t" style="left:1415px;width:300px;text-align:right;top:289.86px;font-size:11px;line-height:13px;letter-spacing:-0.1px;">47,500</div><div style="position:absolute;left:318px;top:314px;width:11px;height:34px;background:#f4f4f4"></div><div style="position:absolute;left:329px;top:313px;width:1px;height:36px;background:#bcbcbc"></div><div style="position:absolute;left:330px;top:314px;width:344px;height:34px;background:#d4d4d4"></div><div style="position:absolute;left:674px;top:314px;width:374px;height:34px;background:#e6e6c0"></div><div style="position:absolute;left:1048px;top:314px;width:370px;height:34px;background:#ddd0e8"></div><div style="position:absolute;left:1418px;top:314px;width:299px;height:34px;background:#d4d4d4"></div><div style="position:absolute;left:318px;top:348px;width:1399px;height:1px;background:#bcbcbc"></div><div class="t" style="left:115px;width:300px;text-align:right;top:324.86px;font-size:11px;line-height:13px;letter-spacing:0.12px;">11.08.2022</div><svg style="position:absolute;left:441px;top:321px" width="18" height="18" viewBox="0 0 18 18"><path d="M2.8 9.2 L8 14 L15.5 3.5" fill="none" stroke="#000" stroke-width="3.8" stroke-linecap="round" stroke-linejoin="miter"/></svg><div class="t" style="left:459px;top:324.86px;font-size:11px;line-height:13px;letter-spacing:-0.1px;">Завершено</div><div class="t" style="left:544px;top:324.86px;font-size:11px;line-height:13px;letter-spacing:-0.1px;">03. Сортування</div><div class="t" style="left:676px;top:318.86px;font-size:11px;line-height:13px;letter-spacing:-0.1px;">14018 Дуб брус 02 після строшки</div><div class="t" style="left:676px;top:331.86px;font-size:11px;line-height:13px;letter-spacing:-0.1px;">1000x100x100, шт</div><div class="t" style="left:652px;width:300px;text-align:right;top:324.86px;font-size:11px;line-height:13px;letter-spacing:-0.1px;">20,000</div><div class="t" style="left:745px;width:300px;text-align:right;top:324.86px;font-size:11px;line-height:13px;letter-spacing:-0.1px;">179,000</div><div class="t" style="left:1050px;top:318.86px;font-size:11px;line-height:13px;letter-spacing:-0.1px;">14019 Дуб брус 03 після</div><div class="t" style="left:1050px;top:331.86px;font-size:11px;line-height:13px;letter-spacing:-0.1px;">сортування, м3</div><div class="t" style="left:1015px;width:300px;text-align:right;top:324.86px;font-size:11px;line-height:13px;letter-spacing:-0.1px;">0,000</div><div class="t" style="left:1115px;width:300px;text-align:right;top:324.86px;font-size:11px;line-height:13px;letter-spacing:-0.1px;">130,000</div><div class="t" style="left:1215px;width:300px;text-align:right;top:324.86px;font-size:11px;line-height:13px;letter-spacing:-0.1px;color:#c8102e;">0,000</div><div class="t" style="left:1315px;width:300px;text-align:right;top:324.86px;font-size:11px;line-height:13px;letter-spacing:-0.1px;">27,374</div><div class="t" style="left:1415px;width:300px;text-align:right;top:324.86px;font-size:11px;line-height:13px;letter-spacing:-0.1px;">49,000</div><div style="position:absolute;left:318px;top:349px;width:11px;height:34px;background:#f4f4f4"></div><div style="position:absolute;left:329px;top:348px;width:1px;height:36px;background:#bcbcbc"></div><div style="position:absolute;left:330px;top:349px;width:344px;height:34px;background:#e4e4e4"></div><div style="position:absolute;left:674px;top:349px;width:374px;height:34px;background:#fdfbd2"></div><div style="position:absolute;left:1048px;top:349px;width:370px;height:34px;background:#efe3fc"></div><div style="position:absolute;left:1418px;top:349px;width:299px;height:34px;background:#e4e4e4"></div><div style="position:absolute;left:318px;top:383px;width:1399px;height:1px;background:#bcbcbc"></div><div class="t" style="left:115px;width:300px;text-align:right;top:359.86px;font-size:11px;line-height:13px;letter-spacing:0.12px;">14.08.2022</div><svg style="position:absolute;left:441px;top:356px" width="18" height="18" viewBox="0 0 18 18"><path d="M2.8 9.2 L8 14 L15.5 3.5" fill="none" stroke="#000" stroke-width="3.8" stroke-linecap="round" stroke-linejoin="miter"/></svg><div class="t" style="left:459px;top:359.86px;font-size:11px;line-height:13px;letter-spacing:-0.1px;">Завершено</div><div class="t" style="left:544px;top:359.86px;font-size:11px;line-height:13px;letter-spacing:-0.1px;">04. Зрощування</div><div class="t" style="left:676px;top:353.86px;font-size:11px;line-height:13px;letter-spacing:-0.1px;">14019 Дуб брус 03 після</div><div class="t" style="left:676px;top:366.86px;font-size:11px;line-height:13px;letter-spacing:-0.1px;">сортування, м3</div><div class="t" style="left:652px;width:300px;text-align:right;top:359.86px;font-size:11px;line-height:13px;letter-spacing:-0.1px;">45,000</div><div class="t" style="left:745px;width:300px;text-align:right;top:359.86px;font-size:11px;line-height:13px;letter-spacing:-0.1px;">45,000</div><div class="t" style="left:1050px;top:353.86px;font-size:11px;line-height:13px;letter-spacing:-0.1px;">14021 Дуб брус 04 після</div><div class="t" style="left:1050px;top:366.86px;font-size:11px;line-height:13px;letter-spacing:-0.1px;">зрощування 1200x5x10, шт</div><div class="t" style="left:1015px;width:300px;text-align:right;top:359.86px;font-size:11px;line-height:13px;letter-spacing:-0.1px;">750,000</div><div class="t" style="left:1115px;width:300px;text-align:right;top:359.86px;font-size:11px;line-height:13px;letter-spacing:-0.1px;">45,000</div><div class="t" style="left:1215px;width:300px;text-align:right;top:359.86px;font-size:11px;line-height:13px;letter-spacing:-0.1px;color:#c8102e;">0,000</div><div class="t" style="left:1315px;width:300px;text-align:right;top:359.86px;font-size:11px;line-height:13px;letter-spacing:-0.1px;">0,000</div><div class="t" style="left:1415px;width:300px;text-align:right;top:359.86px;font-size:11px;line-height:13px;letter-spacing:-0.1px;">0,000</div><div style="position:absolute;left:318px;top:384px;width:11px;height:34px;background:#f4f4f4"></div><div style="position:absolute;left:329px;top:383px;width:1px;height:36px;background:#bcbcbc"></div><div style="position:absolute;left:330px;top:384px;width:344px;height:34px;background:#d4d4d4"></div><div style="position:absolute;left:674px;top:384px;width:374px;height:34px;background:#e6e6c0"></div><div style="position:absolute;left:1048px;top:384px;width:370px;height:34px;background:#ddd0e8"></div><div style="position:absolute;left:1418px;top:384px;width:299px;height:34px;background:#d4d4d4"></div><div style="position:absolute;left:318px;top:418px;width:1399px;height:1px;background:#bcbcbc"></div><div class="t" style="left:115px;width:300px;text-align:right;top:394.86px;font-size:11px;line-height:13px;letter-spacing:0.12px;">15.08.2022</div><svg style="position:absolute;left:441px;top:391px" width="18" height="18" viewBox="0 0 18 18"><path d="M2.8 9.2 L8 14 L15.5 3.5" fill="none" stroke="#000" stroke-width="3.8" stroke-linecap="round" stroke-linejoin="miter"/></svg><div class="t" style="left:459px;top:394.86px;font-size:11px;line-height:13px;letter-spacing:-0.1px;">Завершено</div><div class="t" style="left:544px;top:394.86px;font-size:11px;line-height:13px;letter-spacing:-0.1px;">02, 05. Строшка</div><div class="t" style="left:676px;top:388.86px;font-size:11px;line-height:13px;letter-spacing:-0.1px;">14021 Дуб брус 04 після</div><div class="t" style="left:676px;top:401.86px;font-size:11px;line-height:13px;letter-spacing:-0.1px;">зрощування 1200x5x10, шт</div><div class="t" style="left:652px;width:300px;text-align:right;top:394.86px;font-size:11px;line-height:13px;letter-spacing:-0.1px;">750,000</div><div class="t" style="left:745px;width:300px;text-align:right;top:394.86px;font-size:11px;line-height:13px;letter-spacing:-0.1px;">45,000</div><div class="t" style="left:1050px;top:388.86px;font-size:11px;line-height:13px;letter-spacing:-0.1px;">14021 Дуб брус 05 зрощений</div><div class="t" style="left:1050px;top:401.86px;font-size:11px;line-height:13px;letter-spacing:-0.1px;">після строшки 1200x5x10, шт</div><div class="t" style="left:1015px;width:300px;text-align:right;top:394.86px;font-size:11px;line-height:13px;letter-spacing:-0.1px;">750,000</div><div class="t" style="left:1115px;width:300px;text-align:right;top:394.86px;font-size:11px;line-height:13px;letter-spacing:-0.1px;">44,775</div><div class="t" style="left:1215px;width:300px;text-align:right;top:394.86px;font-size:11px;line-height:13px;letter-spacing:-0.1px;color:#c8102e;">0,000</div><div class="t" style="left:1315px;width:300px;text-align:right;top:394.86px;font-size:11px;line-height:13px;letter-spacing:-0.1px;">0,500</div><div class="t" style="left:1415px;width:300px;text-align:right;top:394.86px;font-size:11px;line-height:13px;letter-spacing:-0.1px;">0,225</div><div style="position:absolute;left:318px;top:419px;width:11px;height:34px;background:#f4f4f4"></div><div style="position:absolute;left:329px;top:418px;width:1px;height:36px;background:#bcbcbc"></div><div style="position:absolute;left:330px;top:419px;width:344px;height:34px;background:#e4e4e4"></div><div style="position:absolute;left:674px;top:419px;width:374px;height:34px;background:#fdfbd2"></div><div style="position:absolute;left:1048px;top:419px;width:370px;height:34px;background:#efe3fc"></div><div style="position:absolute;left:1418px;top:419px;width:299px;height:34px;background:#e4e4e4"></div><div style="position:absolute;left:318px;top:453px;width:1399px;height:1px;background:#bcbcbc"></div><div class="t" style="left:115px;width:300px;text-align:right;top:429.86px;font-size:11px;line-height:13px;letter-spacing:0.12px;">17.08.2022</div><svg style="position:absolute;left:441px;top:426px" width="18" height="18" viewBox="0 0 18 18"><path d="M2.8 9.2 L8 14 L15.5 3.5" fill="none" stroke="#000" stroke-width="3.8" stroke-linecap="round" stroke-linejoin="miter"/></svg><div class="t" style="left:459px;top:429.86px;font-size:11px;line-height:13px;letter-spacing:-0.1px;">Завершено</div><div class="t" style="left:544px;top:429.86px;font-size:11px;line-height:13px;letter-spacing:-0.1px;">06. Склеювання</div><div class="t" style="left:676px;top:423.86px;font-size:11px;line-height:13px;letter-spacing:-0.1px;">14021 Дуб брус 05 зрощений після</div><div class="t" style="left:676px;top:436.86px;font-size:11px;line-height:13px;letter-spacing:-0.1px;">строшки 1200x5x10, шт</div><div class="t" style="left:652px;width:300px;text-align:right;top:429.86px;font-size:11px;line-height:13px;letter-spacing:-0.1px;">750,000</div><div class="t" style="left:745px;width:300px;text-align:right;top:429.86px;font-size:11px;line-height:13px;letter-spacing:-0.1px;">44,775</div><div class="t" style="left:1050px;top:423.86px;font-size:11px;line-height:13px;letter-spacing:-0.1px;">14021 Дуб брус 06 після</div><div class="t" style="left:1050px;top:436.86px;font-size:11px;line-height:13px;letter-spacing:-0.1px;">склеювання 1000x10x10, шт</div><div class="t" style="left:1015px;width:300px;text-align:right;top:429.86px;font-size:11px;line-height:13px;letter-spacing:-0.1px;">350,000</div><div class="t" style="left:1115px;width:300px;text-align:right;top:429.86px;font-size:11px;line-height:13px;letter-spacing:-0.1px;">35,000</div><div class="t" style="left:1215px;width:300px;text-align:right;top:429.86px;font-size:11px;line-height:13px;letter-spacing:-0.1px;color:#c8102e;">0,000</div><div class="t" style="left:1315px;width:300px;text-align:right;top:429.86px;font-size:11px;line-height:13px;letter-spacing:-0.1px;">21,831</div><div class="t" style="left:1415px;width:300px;text-align:right;top:429.86px;font-size:11px;line-height:13px;letter-spacing:-0.1px;">9,775</div><div style="position:absolute;left:318px;top:454px;width:11px;height:34px;background:#f4f4f4"></div><div style="position:absolute;left:329px;top:453px;width:1px;height:36px;background:#bcbcbc"></div><div style="position:absolute;left:330px;top:454px;width:344px;height:34px;background:#d4d4d4"></div><div style="position:absolute;left:674px;top:454px;width:374px;height:34px;background:#e6e6c0"></div><div style="position:absolute;left:1048px;top:454px;width:370px;height:34px;background:#ddd0e8"></div><div style="position:absolute;left:1418px;top:454px;width:299px;height:34px;background:#d4d4d4"></div><div style="position:absolute;left:318px;top:488px;width:1399px;height:1px;background:#bcbcbc"></div><div class="t" style="left:115px;width:300px;text-align:right;top:464.86px;font-size:11px;line-height:13px;letter-spacing:0.12px;">19.08.2022</div><svg style="position:absolute;left:441px;top:461px" width="18" height="18" viewBox="0 0 18 18"><path d="M2.8 9.2 L8 14 L15.5 3.5" fill="none" stroke="#000" stroke-width="3.8" stroke-linecap="round" stroke-linejoin="miter"/></svg><div class="t" style="left:459px;top:464.86px;font-size:11px;line-height:13px;letter-spacing:-0.1px;">Завершено</div><div class="t" style="left:544px;top:464.86px;font-size:11px;line-height:13px;letter-spacing:-0.1px;">07. Профілювання</div><div class="t" style="left:676px;top:458.86px;font-size:11px;line-height:13px;letter-spacing:-0.1px;">14021 Дуб брус 06 після</div><div class="t" style="left:676px;top:471.86px;font-size:11px;line-height:13px;letter-spacing:-0.1px;">склеювання 1000x10x10, шт</div><div class="t" style="left:652px;width:300px;text-align:right;top:464.86px;font-size:11px;line-height:13px;letter-spacing:-0.1px;">350,000</div><div class="t" style="left:745px;width:300px;text-align:right;top:464.86px;font-size:11px;line-height:13px;letter-spacing:-0.1px;">35,000</div><div class="t" style="left:1050px;top:458.86px;font-size:11px;line-height:13px;letter-spacing:-0.1px;">14021 Дуб брус 07 після</div><div class="t" style="left:1050px;top:471.86px;font-size:11px;line-height:13px;letter-spacing:-0.1px;">профілювання 1000x10x9, шт</div><div class="t" style="left:1015px;width:300px;text-align:right;top:464.86px;font-size:11px;line-height:13px;letter-spacing:-0.1px;">340,000</div><div class="t" style="left:1115px;width:300px;text-align:right;top:464.86px;font-size:11px;line-height:13px;letter-spacing:-0.1px;">30,464</div><div class="t" style="left:1215px;width:300px;text-align:right;top:464.86px;font-size:11px;line-height:13px;letter-spacing:-0.1px;color:#c8102e;">10,000</div><div class="t" style="left:1315px;width:300px;text-align:right;top:464.86px;font-size:11px;line-height:13px;letter-spacing:-0.1px;">12,960</div><div class="t" style="left:1415px;width:300px;text-align:right;top:464.86px;font-size:11px;line-height:13px;letter-spacing:-0.1px;">4,536</div><div style="position:absolute;left:318px;top:489px;width:11px;height:34px;background:#f4f4f4"></div><div style="position:absolute;left:329px;top:488px;width:1px;height:36px;background:#bcbcbc"></div><div style="position:absolute;left:330px;top:489px;width:344px;height:34px;background:#e4e4e4"></div><div style="position:absolute;left:674px;top:489px;width:374px;height:34px;background:#fdfbd2"></div><div style="position:absolute;left:1048px;top:489px;width:370px;height:34px;background:#efe3fc"></div><div style="position:absolute;left:1418px;top:489px;width:299px;height:34px;background:#e4e4e4"></div><div style="position:absolute;left:318px;top:523px;width:1399px;height:1px;background:#bcbcbc"></div><div class="t" style="left:115px;width:300px;text-align:right;top:499.86px;font-size:11px;line-height:13px;letter-spacing:0.12px;">20.08.2022</div><svg style="position:absolute;left:441px;top:496px" width="18" height="18" viewBox="0 0 18 18"><path d="M2.8 9.2 L8 14 L15.5 3.5" fill="none" stroke="#000" stroke-width="3.8" stroke-linecap="round" stroke-linejoin="miter"/></svg><div class="t" style="left:459px;top:499.86px;font-size:11px;line-height:13px;letter-spacing:-0.1px;">Завершено</div><div class="t" style="left:544px;top:499.86px;font-size:11px;line-height:13px;letter-spacing:-0.1px;">08. Нарізка чаш</div><div class="t" style="left:676px;top:493.86px;font-size:11px;line-height:13px;letter-spacing:-0.1px;">14021 Дуб брус 07 після</div><div class="t" style="left:676px;top:506.86px;font-size:11px;line-height:13px;letter-spacing:-0.1px;">профілювання 1000x10x9, шт</div><div class="t" style="left:652px;width:300px;text-align:right;top:499.86px;font-size:11px;line-height:13px;letter-spacing:-0.1px;">340,000</div><div class="t" style="left:745px;width:300px;text-align:right;top:499.86px;font-size:11px;line-height:13px;letter-spacing:-0.1px;">30,464</div><div class="t" style="left:1050px;top:493.86px;font-size:11px;line-height:13px;letter-spacing:-0.1px;">14021 Дуб стіновий брус</div><div class="t" style="left:1050px;top:506.86px;font-size:11px;line-height:13px;letter-spacing:-0.1px;">1200x5x10, шт</div><div class="t" style="left:1015px;width:300px;text-align:right;top:499.86px;font-size:11px;line-height:13px;letter-spacing:-0.1px;">500,000</div><div class="t" style="left:1115px;width:300px;text-align:right;top:499.86px;font-size:11px;line-height:13px;letter-spacing:-0.1px;">29,850</div><div class="t" style="left:1215px;width:300px;text-align:right;top:499.86px;font-size:11px;line-height:13px;letter-spacing:-0.1px;color:#c8102e;">0,000</div><div class="t" style="left:1315px;width:300px;text-align:right;top:499.86px;font-size:11px;line-height:13px;letter-spacing:-0.1px;">2,015</div><div class="t" style="left:1415px;width:300px;text-align:right;top:499.86px;font-size:11px;line-height:13px;letter-spacing:-0.1px;">0,614</div><div style="position:absolute;left:318px;top:210px;width:1px;height:314px;background:#c4c4c4"></div><div style="position:absolute;left:330px;top:244px;width:1387px;height:34px;border:1px dotted #202020"></div><svg style="position:absolute;left:321px;top:257px" width="6" height="9" viewBox="0 0 6 9"><path d="M1 0.5 V8.5 L5 4.5 Z" fill="#505050"/></svg><div style="position:absolute;left:318px;top:681px;width:1400px;height:31px;border-top:1px solid #bcbcbc;border-right:1px solid #bcbcbc;background:#f4f4f4"></div><div style="position:absolute;left:318px;top:711px;width:1430px;height:3px;background:#bdbdbd"></div><div style="position:absolute;left:17px;top:713px;width:1731px;height:1px;background:#b4b4b4"></div><div style="position:absolute;left:234px;top:716px;width:1514px;height:1px;background:#b4b4b4"></div><div style="position:absolute;left:1747px;top:713px;width:1px;height:4px;background:#b4b4b4"></div><div style="position:absolute;left:17px;top:713px;width:1px;height:43px;background:#b4b4b4"></div><div style="position:absolute;left:234px;top:713px;width:1px;height:43px;background:#b4b4b4"></div><div style="position:absolute;left:18px;top:756px;width:217px;height:2px;background:#109cf0"></div><svg style="position:absolute;left:31px;top:722px" width="25" height="27" viewBox="0 0 25 27"><defs><linearGradient id="bk2" x1="0" y1="0" x2="0" y2="1"><stop offset="0" stop-color="#c4def6"/><stop offset="1" stop-color="#6ea4dc"/></linearGradient><linearGradient id="bk2s" x1="0" y1="0" x2="1" y2="0"><stop offset="0" stop-color="#2a3458"/><stop offset="0.5" stop-color="#6a7498"/><stop offset="1" stop-color="#2e3a62"/></linearGradient></defs><rect x="0.5" y="0.5" width="24" height="26" rx="2.2" fill="url(#bk2)" stroke="#3a5ca4" stroke-width="1"/><rect x="1" y="1" width="4.5" height="25" rx="1.5" fill="url(#bk2s)"/><rect x="2.5" y="1.5" width="21" height="2.6" fill="#f6f8fc"/><rect x="5.5" y="4.1" width="18" height="0.8" fill="#5a80c0"/></svg><div class="t" style="left:65px;top:729.86px;font-size:11px;line-height:13px;letter-spacing:-0.1px;color:#1a90e0;">Робота з номенклатурою</div><svg style="position:absolute;left:208px;top:731px" width="10" height="10" viewBox="0 0 10 10"><path d="M1 1 L9 9 M9 1 L1 9" stroke="#1a90e0" stroke-width="1.8"/></svg><svg style="position:absolute;left:22px;top:760px" width="18" height="17" viewBox="0 0 18 17"><circle cx="9" cy="8" r="7.9" fill="#4a80c0"/><rect x="8" y="4" width="2" height="2" fill="#fff"/><rect x="8" y="7.2" width="2" height="4.8" fill="#fff"/></svg><div class="t" style="left:56px;top:762.86px;font-size:11px;line-height:13px;letter-spacing:-0.1px;">7.2.9166.10 Professional</div><div style="position:absolute;left:197px;top:761px;width:1px;height:15px;background:#b8b8b8"></div><div style="position:absolute;left:333px;top:761px;width:1px;height:15px;background:#b8b8b8"></div><div style="position:absolute;left:476px;top:761px;width:1px;height:15px;background:#b8b8b8"></div><div style="position:absolute;left:595px;top:761px;width:1px;height:15px;background:#b8b8b8"></div><div style="position:absolute;left:708px;top:761px;width:1px;height:15px;background:#b8b8b8"></div><div style="position:absolute;left:1723px;top:761px;width:1px;height:15px;background:#b8b8b8"></div><svg style="position:absolute;left:207px;top:759px" width="16" height="18" viewBox="0 0 16 18"><defs><linearGradient id="db" x1="0" y1="0" x2="1" y2="0"><stop offset="0" stop-color="#d89030"/><stop offset="0.45" stop-color="#fde2a0"/><stop offset="1" stop-color="#c87820"/></linearGradient></defs><path d="M2 3 V15 Q8 18 14 15 V3 Z" fill="url(#db)" stroke="#b06a20" stroke-width="0.7"/><ellipse cx="8" cy="3" rx="6" ry="2" fill="#fde2a0" stroke="#b06a20" stroke-width="0.7"/><path d="M2 7 Q8 10 14 7 M2 11 Q8 14 14 11" fill="none" stroke="#b06a20" stroke-width="0.7"/></svg><div class="t" style="left:239px;top:762.86px;font-size:11px;line-height:13px;letter-spacing:-0.1px;">localhost (utf8)</div><svg style="position:absolute;left:343px;top:760px" width="16" height="17" viewBox="0 0 16 17"><path d="M1 15.5 Q1 10 8 9.6 Q15 10 15 15.5 Z" fill="#84bc48" stroke="#5a8a30" stroke-width="0.6"/><ellipse cx="8" cy="6" rx="3.9" ry="4.8" fill="#b06838" stroke="#8a5030" stroke-width="0.5"/><ellipse cx="8.2" cy="7.2" rx="2.9" ry="3.5" fill="#f2d0a8"/></svg><div class="t" style="left:375px;top:763.00px;font-size:10.6px;line-height:13px;">NIKOLAY (MAIN)</div><svg style="position:absolute;left:487px;top:761px" width="15" height="15" viewBox="0 0 15 15"><rect x="0.5" y="0.5" width="13.5" height="13.5" fill="#fafbfe" stroke="#7890c8"/><rect x="0.5" y="0.5" width="13.5" height="2.4" fill="#e05050"/><text x="7.3" y="12.9" font-size="10" font-weight="bold" text-anchor="middle" fill="#3a4468" font-family="Liberation Sans" textLength="10" lengthAdjust="spacingAndGlyphs">31</text></svg><div class="t" style="left:518px;top:762.86px;font-size:11px;line-height:13px;letter-spacing:-0.1px;">03.11.2025</div><div class="t" style="left:623px;top:762.23px;font-size:11.4px;line-height:14px;">0:00:00:001</div><svg style="position:absolute;left:0;top:0" width="1765" height="795" viewBox="0 0 1765 795"><rect x="1743" y="766" width="3" height="1" fill="#6a6a6a"/><rect x="1744" y="765" width="1" height="3" fill="#6a6a6a"/><rect x="1739" y="770" width="3" height="1" fill="#6a6a6a"/><rect x="1740" y="769" width="1" height="3" fill="#6a6a6a"/><rect x="1743" y="770" width="3" height="1" fill="#6a6a6a"/><rect x="1744" y="769" width="1" height="3" fill="#6a6a6a"/><rect x="1735" y="774" width="3" height="1" fill="#6a6a6a"/><rect x="1736" y="773" width="1" height="3" fill="#6a6a6a"/><rect x="1739" y="774" width="3" height="1" fill="#6a6a6a"/><rect x="1740" y="773" width="1" height="3" fill="#6a6a6a"/><rect x="1743" y="774" width="3" height="1" fill="#6a6a6a"/><rect x="1744" y="773" width="1" height="3" fill="#6a6a6a"/></svg></body></html>
